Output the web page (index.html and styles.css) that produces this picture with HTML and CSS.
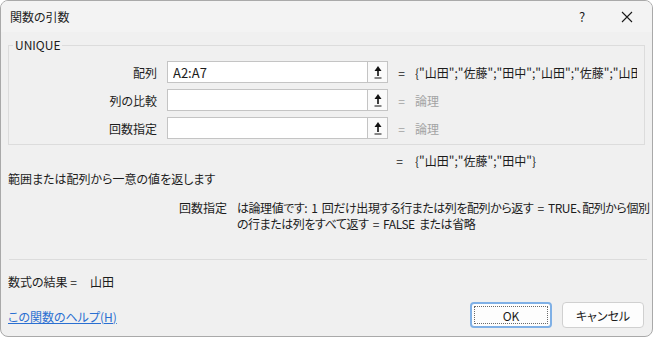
FILE: index.html
```html
<!DOCTYPE html>
<html lang="ja">
<head>
  <meta charset="UTF-8" />
  <title>関数の引数</title>
  <link rel="stylesheet" href="styles.css">
</head>
<body>
<div class="dialog">
  <div class="titlebar">
    <span class="title">関数の引数</span>
    <span class="help">?</span>
    <span class="close">
      <svg width="12" height="12" viewBox="0 0 12 12"><path d="M1 1L11 11M11 1L1 11" stroke="#1a1a1a" stroke-width="1.1" fill="none"/></svg>
    </span>
  </div>

  <div class="content">
    <fieldset class="args">
      <legend>UNIQUE</legend>

      <div class="arg-row">
        <label>配列</label>
        <div class="ref">
          <input type="text" value="A2:A7" />
          <button class="ref-btn"><svg width="8" height="13" viewBox="0 0 8 13"><path d="M4 0L7.5 5H0.5Z" fill="#111"/><rect x="3.2" y="4" width="1.6" height="6" fill="#111"/><rect x="0.5" y="11.5" width="7" height="1" fill="#111"/></svg></button>
        </div>
        <span class="eq">=</span>
        <span class="val">{"山田";"佐藤";"田中";"山田";"佐藤";"山田"}</span>
      </div>

      <div class="arg-row">
        <label>列の比較</label>
        <div class="ref">
          <input type="text" value="" />
          <button class="ref-btn"><svg width="8" height="13" viewBox="0 0 8 13"><path d="M4 0L7.5 5H0.5Z" fill="#111"/><rect x="3.2" y="4" width="1.6" height="6" fill="#111"/><rect x="0.5" y="11.5" width="7" height="1" fill="#111"/></svg></button>
        </div>
        <span class="eq muted">=</span>
        <span class="val muted">論理</span>
      </div>

      <div class="arg-row">
        <label>回数指定</label>
        <div class="ref">
          <input type="text" value="" />
          <button class="ref-btn"><svg width="8" height="13" viewBox="0 0 8 13"><path d="M4 0L7.5 5H0.5Z" fill="#111"/><rect x="3.2" y="4" width="1.6" height="6" fill="#111"/><rect x="0.5" y="11.5" width="7" height="1" fill="#111"/></svg></button>
        </div>
        <span class="eq muted">=</span>
        <span class="val muted">論理</span>
      </div>
    </fieldset>

    <div class="result-row">
      <span class="eq">=</span>
      <span class="val">{"山田";"佐藤";"田中"}</span>
    </div>

    <p class="summary">範囲または配列から一意の値を返します</p>

    <div class="arg-help">
      <span class="arg-name">回数指定</span>
      <span class="arg-desc">は論理値です: 1 回だけ出現する行または列を配列から返す = TRUE、配列から個別<br>の行または列をすべて返す = FALSE または省略</span>
    </div>

    <div class="divider"></div>

    <div class="formula-result"><span>数式の結果 =</span><span class="result-value">山田</span></div>

    <div class="footer">
      <a href="#" class="help-link">この関数のヘルプ(H)</a>
      <div class="buttons">
        <button class="btn btn-ok">OK</button>
        <button class="btn">キャンセル</button>
      </div>
    </div>
  </div>
</div>
</body>
</html>
```

FILE: styles.css
```css
html, body { margin: 0; padding: 0; background: #ffffff; }
body { font-family: "Noto Sans CJK JP", "Noto Sans", sans-serif; font-size: 12px; color: #1c1c1c; font-feature-settings: "palt"; }

.dialog { width: 653px; height: 337px; box-sizing: border-box; border: 1px solid #a9a9a9; border-radius: 8px; background: #f0f0f0; overflow: hidden; }

.titlebar { height: 31px; background: #f3f3f3; display: flex; align-items: center; padding-left: 9px; }
.title { flex: 1; font-size: 12px; }
.help { width: 14px; font-size: 13px; margin-right: 32px; text-align: center; }
.close { width: 12px; height: 12px; margin-right: 19px; display: flex; }

.content { padding: 5px 7px 0 7px; }

.args { margin: 0; padding: 8px 0 5px 0; border: 1px solid #dcdcdc; }
.args legend { padding: 0 2px; margin-left: 4px; line-height: 16px; font-size: 12px; }

.arg-row { display: flex; align-items: center; height: 22px; margin-bottom: 6px; }
.arg-row:last-child { margin-bottom: 0; }
.arg-row label { width: 148px; text-align: right; margin-right: 10px; }

.ref { display: flex; height: 22px; }
.ref input { width: 201px; height: 22px; box-sizing: border-box; border: 1px solid #c4c4c4; background: #fff; padding: 0 5px; font-family: "Noto Sans CJK JP", sans-serif; font-size: 13px; color: #1c1c1c; outline: none; }
.ref-btn { width: 20px; height: 22px; box-sizing: border-box; border: 1px solid #c4c4c4; border-left: none; background: #fafafa; padding: 0; display: flex; align-items: center; justify-content: center; }

.eq { margin-left: 10px; width: 7px; text-align: center; }
.val { margin-left: 10px; white-space: nowrap; overflow: hidden; width: 222px; font-size: 12px; }
.muted { color: #a3a3a3; }

.result-row { display: flex; line-height: 16px; margin-top: 8px; padding-left: 388px; }
.result-row .eq { margin-left: 0; }
.result-row .val { margin-left: 12px; }

.summary { margin: 2px 0 0 0; line-height: 16px; }

.arg-help { display: flex; margin-top: 13px; line-height: 16px; }
.arg-name { flex-shrink: 0; width: 219px; text-align: right; margin-right: 10px; }
.arg-desc { white-space: nowrap; letter-spacing: -0.45px; word-spacing: 2px; }

.divider { height: 1px; background: #dcdcdc; margin: 27px 0 0 1px; width: 638px; }

.formula-result { margin-top: 14px; line-height: 16px; display: flex; }
.result-value { margin-left: 13px; }

.footer { display: flex; align-items: center; justify-content: space-between; margin-top: 12px; }
.help-link { color: #2a6fd1; text-decoration: underline; margin-top: 2px; }
.buttons { display: flex; gap: 10px; margin-right: 1px; }
.btn { width: 82px; height: 26px; box-sizing: border-box; border: 1px solid #d0d0d0; border-radius: 4px; background: #fdfdfd; font-family: "Noto Sans CJK JP", sans-serif; font-size: 12px; color: #1c1c1c; font-feature-settings: "palt"; }
.btn-ok { border: 2px solid #7fb0e6; outline: 1px dotted #6a6a6a; outline-offset: -5px; }
```
